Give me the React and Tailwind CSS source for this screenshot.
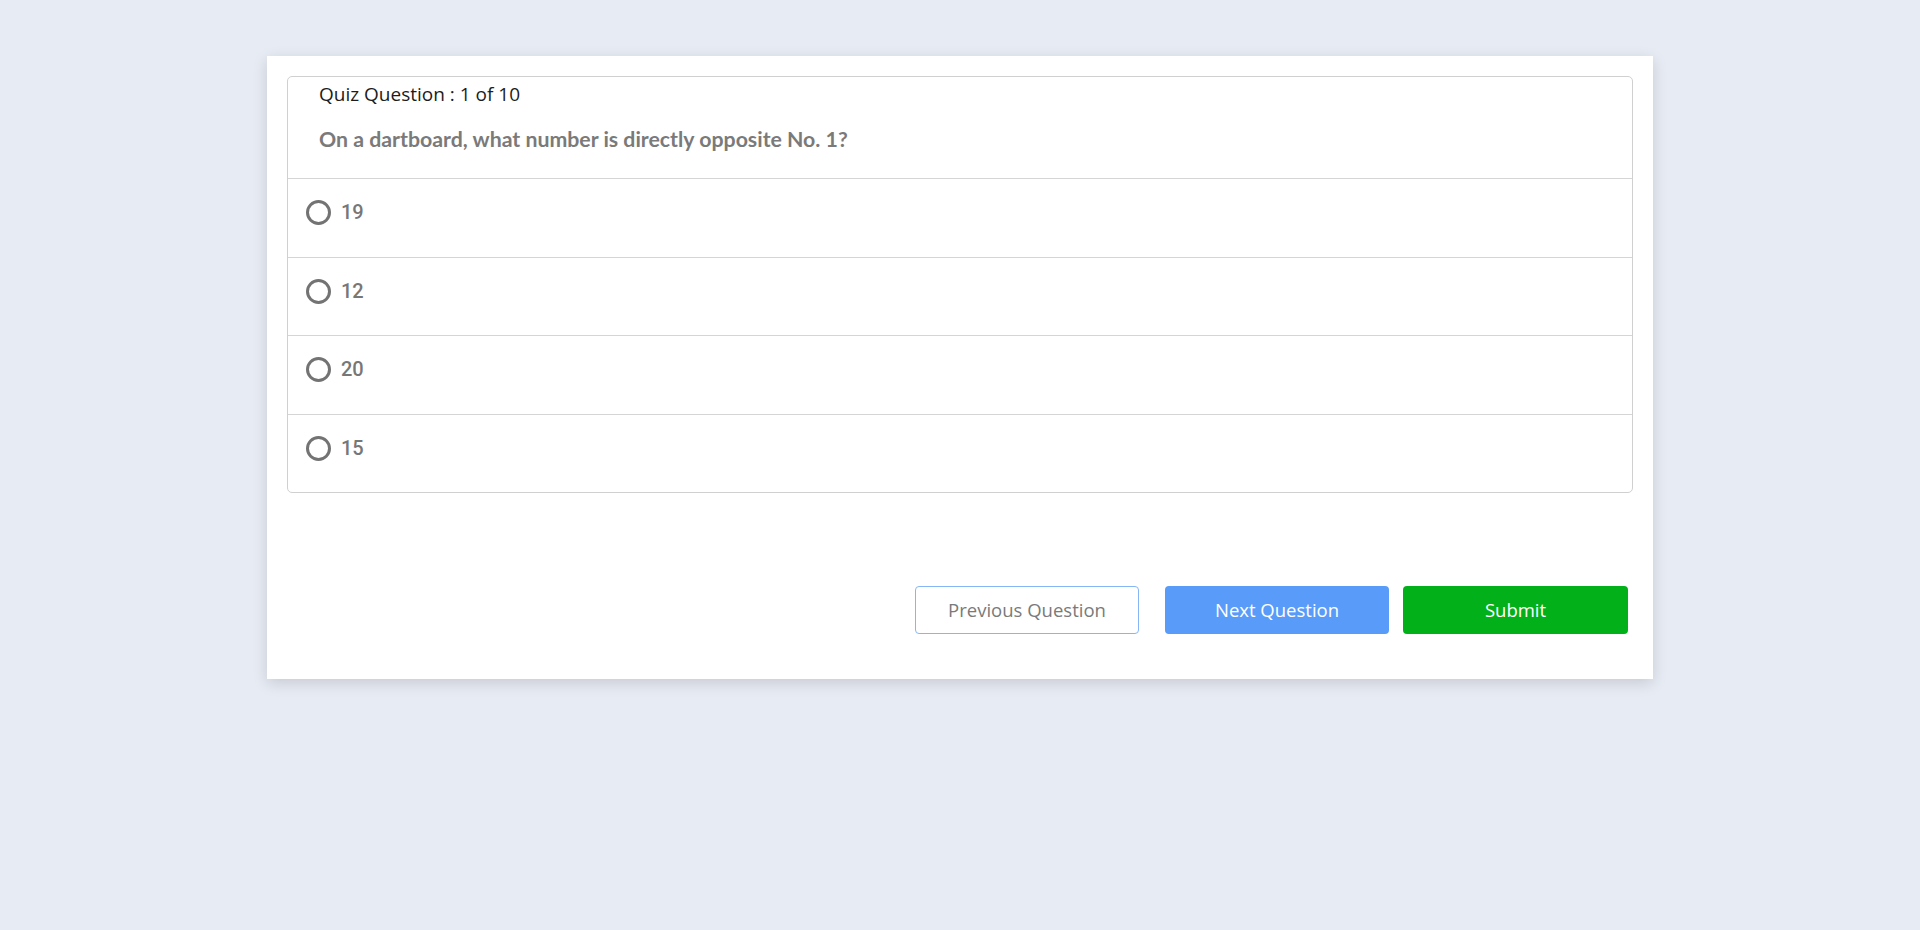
import React from "react";

const options = ["19", "12", "20", "15"];
const rowClass = [
  "flex h-[79px] items-start border-b border-[#d5d5d5] pl-[18px] pt-[21px]",
  "flex h-[78px] items-start border-b border-[#d5d5d5] pl-[18px] pt-[21px]",
  "flex h-[79px] items-start border-b border-[#d5d5d5] pl-[18px] pt-[21px]",
  "flex h-[77px] items-start pl-[18px] pt-[21px]",
];

export default function App() {
  return (
    <div className="min-h-screen w-full bg-[#e7ebf4] pt-[56px]">
      <div className="mx-auto w-[1386px] bg-white px-[20px] pt-[20px] pb-[45px] shadow-[0_4px_14px_rgba(0,0,0,0.14)]">
        <div className="rounded-[5px] border border-[#d0d0d0]">
          <div className="flex h-[102px] flex-col border-b border-[#d5d5d5] pl-[31px] pt-[4px]">
            <div
              className="text-[19px] leading-[26px] text-[#1c1c1c]"
              style={{ fontFamily: '"Open Sans", sans-serif' }}
            >
              Quiz Question : 1 of 10
            </div>
            <div
              className="mt-[19px] text-[21.3px] font-bold leading-[26px] text-[#7a7a7a]"
              style={{ fontFamily: 'Lato, sans-serif' }}
            >
              On a dartboard, what number is directly opposite No. 1?
            </div>
          </div>
          {options.map((o, i) => (
            <div key={o} className={rowClass[i]}>
              <div className="flex items-center gap-[10px]">
                <span className="block h-[25px] w-[25px] rounded-full border-[3px] border-[#737373]" />
                <span
                  className="text-[20px] font-medium leading-[25px] text-[#777777]"
                  style={{ fontFamily: 'Roboto, sans-serif' }}
                >
                  {o}
                </span>
              </div>
            </div>
          ))}
        </div>
        <div
          className="mt-[93px] mr-[5px] flex justify-end"
          style={{ fontFamily: '"Open Sans", sans-serif' }}
        >
          <button className="h-[48px] w-[224px] rounded-[4px] border-[1.5px] border-[#86b6f8] bg-white text-[18.5px] text-[#7a7a7a]">
            Previous Question
          </button>
          <button className="ml-[26px] h-[48px] w-[224px] rounded-[4px] bg-[#589bf9] text-[18.5px] text-white">
            Next Question
          </button>
          <button className="ml-[14px] h-[48px] w-[225px] rounded-[4px] bg-[#02b01a] text-[18.5px] text-white">
            Submit
          </button>
        </div>
      </div>
    </div>
  );
}
